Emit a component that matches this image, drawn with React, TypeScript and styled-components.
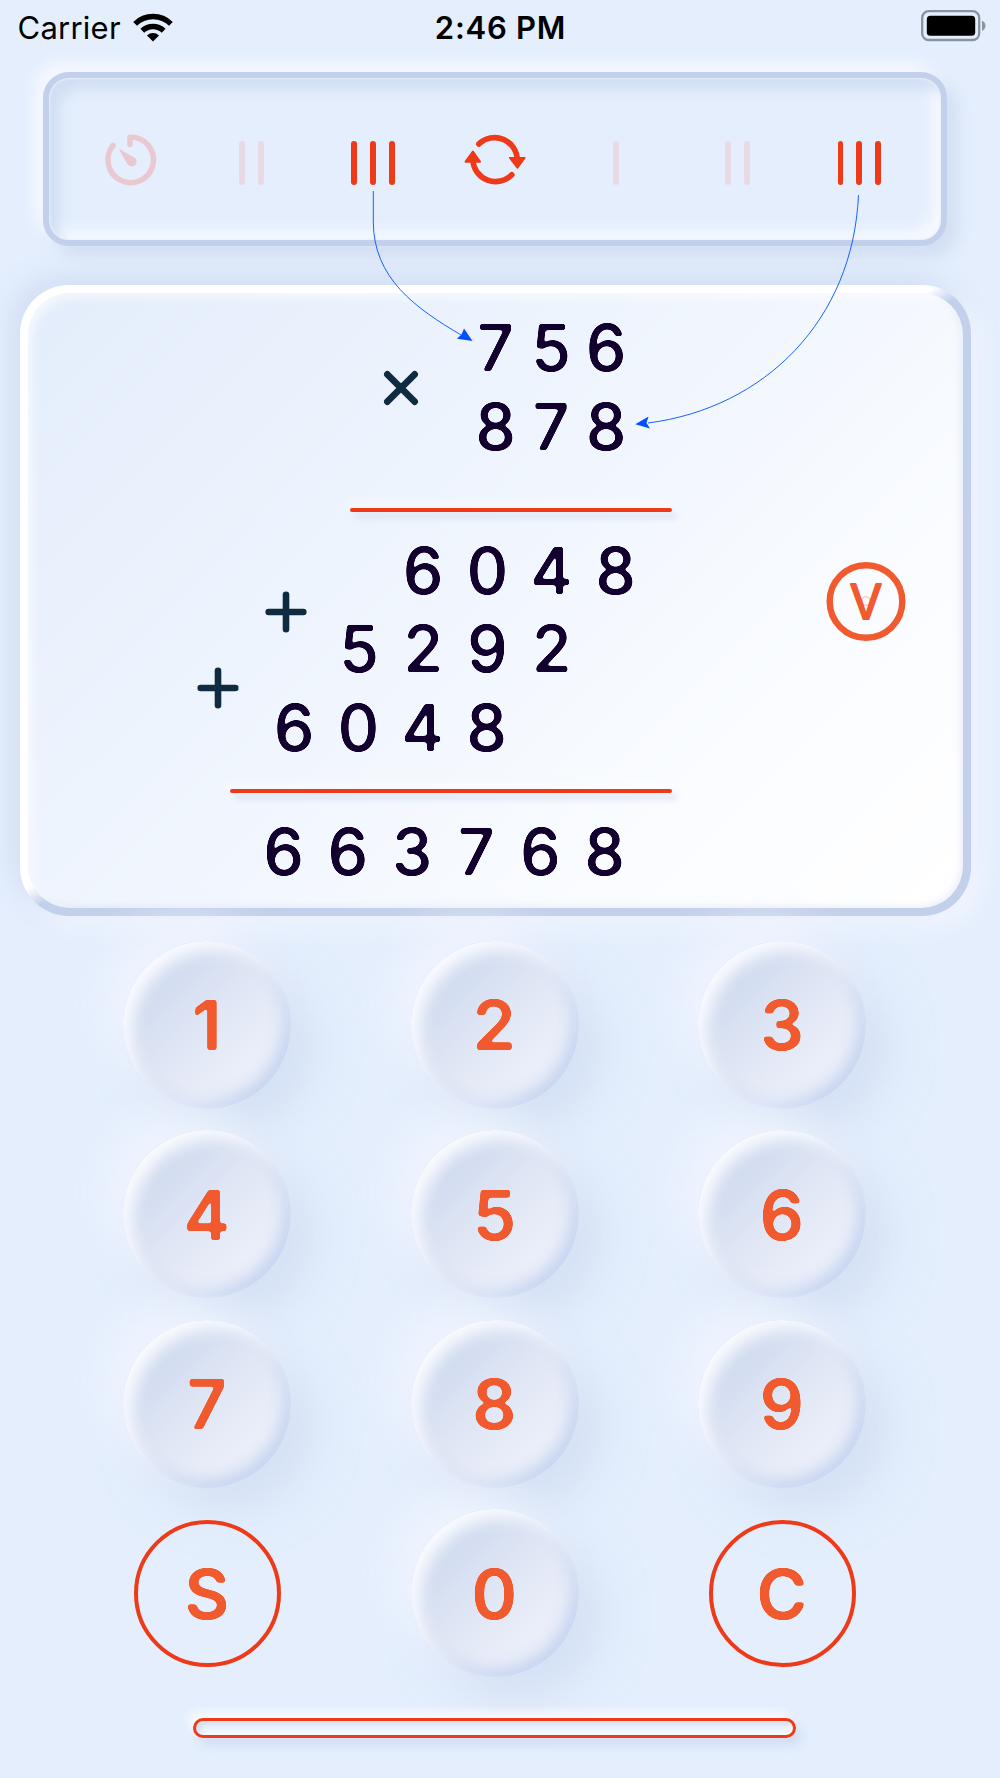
import React from 'react';
import styled, { createGlobalStyle, css } from 'styled-components';

const color = {
  page: '#e4eefd',
  edge: '#c3d0eb',
  red: '#ee3a18',
  orange: '#f15a2e',
  ink: '#12002e',
  operator: '#0f2b3f',
  arrow: '#0050ff',
};

const GlobalStyle = createGlobalStyle`
  * { box-sizing: border-box; }
  body {
    margin: 0;
    background: ${color.page};
    font-family: Inter, "Liberation Sans", sans-serif;
  }
`;

const Screen = styled.main`
  position: relative;
  width: 1000px;
  height: 1778px;
  overflow: hidden;
  display: flex;
  flex-direction: column;
  background: ${color.page};
`;

/* ---------- status bar ---------- */

const StatusBar = styled.header`
  display: grid;
  grid-template-columns: 1fr auto 1fr;
  align-items: center;
  height: 55px;
  padding: 0 14px 0 17px;
  color: #000;
  font-size: 31px;
  line-height: 55px;
`;

const Carrier = styled.div`
  display: flex;
  align-items: center;
  gap: 12px;
  padding-left: 0.5px;
  letter-spacing: 0.25px;
`;

const Clock = styled.time`
  margin-right: 2px;
  font-weight: 600;
  letter-spacing: 0.75px;
`;

const BatteryIcon = styled.svg`
  justify-self: end;
  margin-bottom: 4px;
`;

/* ---------- toolbar ---------- */

const Toolbar = styled.nav`
  flex: none;
  display: flex;
  align-items: center;
  width: 904px;
  height: 174px;
  margin: 17px 0 0 43px;
  padding: 2px 21px 0 20px;
  border: 6px solid ${color.edge};
  border-radius: 26px;
  box-shadow:
    -10px -10px 16px rgba(245, 248, 255, 0.95),
    11px 11px 14px rgba(205, 217, 240, 0.75),
    inset 0 0 2px 1px rgba(232, 240, 253, 1),
    inset 12px 13px 12px -2px rgba(205, 218, 240, 0.8),
    inset -12px -12px 13px -2px rgba(246, 249, 255, 0.95);
`;

const Tool = styled.button`
  flex: 1;
  height: 60px;
  padding: 0;
  border: 0;
  background: none;
  display: flex;
  align-items: center;
  justify-content: center;
`;

const Tally = styled.span`
  display: flex;
  gap: 13px;
  padding-top: 6px;
`;

const Stick = styled.i<{ $on?: boolean }>`
  width: 5.8px;
  height: 44px;
  border-radius: 3px;
  background: ${(p) => (p.$on ? color.red : '#e8dae4')};
`;

/* ---------- calculation display ---------- */

const Display = styled.section`
  flex: none;
  width: 951px;
  height: 631px;
  margin: 39px 0 0 20px;
  padding: 8px;
  border-radius: 49px;
  background: linear-gradient(to bottom right, #fff 48.2%, ${color.edge} 50.2%);
  box-shadow:
    -10px -10px 24px rgba(208, 221, 243, 0.85),
    10px 10px 24px rgba(244, 247, 255, 0.95);
`;

const Sheet = styled.div`
  display: grid;
  grid-template-columns: minmax(0, 1fr) auto;
  align-items: center;
  height: 615px;
  padding-right: 57px;
  border-radius: 42px;
  background: linear-gradient(135deg, #e3edfb 0%, #f1f6fe 48%, #fafcff 75%, #fff 100%);
  box-shadow:
    inset 5px 5px 8px rgba(255, 255, 255, 0.6),
    inset -3px -2px 6px rgba(195, 208, 235, 0.3);
`;

const Working = styled.div`
  display: flex;
  flex-direction: column;
  align-self: start;
  padding-top: 15.5px;
`;

const Step = styled.div<{ $top?: number }>`
  display: grid;
  margin-top: ${(p) => p.$top ?? 0}px;
  > * { grid-area: 1 / 1; }
`;

const Operators = styled.div`
  display: flex;
  flex-direction: column;
`;

const Operator = styled.svg<{ $left: number; $top: number }>`
  display: block;
  flex: none;
  width: 42px;
  height: 42px;
  margin: ${(p) => p.$top}px 0 0 ${(p) => p.$left}px;
  fill: none;
  stroke: ${color.operator};
  stroke-width: 6.6;
  stroke-linecap: round;
`;

const rounded = css`
  filter: url(#soft-corners);
`;

const Rows = styled.div`
  display: flex;
  flex-direction: column;
`;

const Row = styled.div<{ $left: number }>`
  display: flex;
  height: 78.5px;
  padding: 0.6px 0 0 ${(p) => p.$left}px;
  color: ${color.ink};
  font-size: 64px;
  font-weight: 500;
  line-height: 78.5px;
  ${rounded}
`;

const Digit = styled.span<{ $w: number }>`
  width: ${(p) => p.$w}px;
  display: flex;
  justify-content: center;
`;

const Rule = styled.hr<{ $w: number; $left: number; $top: number }>`
  flex: none;
  width: ${(p) => p.$w}px;
  height: 4px;
  margin: ${(p) => p.$top}px 0 0 ${(p) => p.$left}px;
  border: 0;
  border-radius: 2px;
  background: ${color.red};
  box-shadow: 5px 6px 6px rgba(200, 212, 238, 0.7), -5px -5px 8px rgba(255, 255, 255, 0.9);
`;

const CheckButton = styled.button`
  padding: 0;
  border: 0;
  background: none;
  svg { display: block; }
`;

/* ---------- keypad ---------- */

const Keypad = styled.section`
  flex: none;
  display: grid;
  grid-template-columns: repeat(3, 287.5px);
  grid-auto-rows: 189.5px;
  place-items: center;
  margin: 14px 0 0 63.6px;
`;

const Key = styled.button<{ $ring?: boolean }>`
  padding: 0;
  display: grid;
  place-items: center;
  border-radius: 50%;
  font: 600 69px/1 Inter, "Liberation Sans", sans-serif;
  color: ${color.orange};
  ${(p) =>
    p.$ring
      ? css`
          width: 147px;
          height: 147px;
          border: 4px solid ${color.red};
          background: transparent;
        `
      : css`
          width: 168px;
          height: 168px;
          border: 0;
          background: linear-gradient(135deg, #cbd7ee 12%, #e1e7f5 52%, #f0f3fc 88%);
          box-shadow:
            -22px -22px 44px rgba(244, 247, 255, 0.7),
            22px 22px 44px rgba(201, 215, 239, 0.6),
            inset 9px 9px 16px rgba(252, 253, 255, 0.95),
            inset -7px -7px 15px rgba(190, 206, 238, 0.85);
        `}
`;

const KeyLabel = styled.span`
  padding: 2px 9px 0 8px;
  ${rounded}
`;

const HomeBar = styled.div`
  flex: none;
  width: 603px;
  height: 20px;
  margin: 30px 0 0 193px;
  border: 3px solid ${color.red};
  border-radius: 10px;
  background: #eef4fd;
  box-shadow:
    -6px -7px 8px rgba(248, 250, 255, 0.85),
    6px 8px 8px rgba(205, 217, 240, 0.75),
    inset 4px 4px 4px rgba(212, 222, 241, 0.9),
    inset -3px -3px 4px rgba(250, 252, 255, 0.8);
`;

const Pointers = styled.svg`
  position: absolute;
  inset: 0;
  pointer-events: none;
`;

const Hidden = styled.svg`
  position: absolute;
`;

/* ---------- parts ---------- */

const WifiIcon = () => (
  <svg width="40" height="29" viewBox="0 0 40 29" fill="none" stroke="#000" strokeWidth="5.4">
    <path d="M2.1 10.8 A25.5 25.5 0 0 1 37.9 10.8" />
    <path d="M9.3 17.8 A15.4 15.4 0 0 1 30.7 17.8" />
    <path d="M20 28.4 L14 22.4 A8.6 8.6 0 0 1 26 22.4 Z" fill="#000" stroke="none" />
  </svg>
);

const TimerIcon = () => (
  <svg width="60" height="60" viewBox="101 130 60 60" fill="none" stroke="#e9c8cf" strokeWidth="5.4" strokeLinecap="round" strokeLinejoin="round">
    <path d="M131 144.5 V137.1 A22.8 22.8 0 1 1 114.2 145.3" />
    <path d="M121 150.1 L136.2 158.8 A4.4 4.4 0 0 1 129 164 Z" fill="#e9c8cf" stroke="#e9c8cf" strokeWidth="1.2" />
  </svg>
);

const RefreshIcon = () => (
  <svg width="62" height="60" viewBox="463 130 62 60" fill="none" stroke={color.red} strokeWidth="5.6" strokeLinecap="round" strokeLinejoin="round">
    <path d="M477.8 144 A22.7 22.7 0 0 1 516.3 160" />
    <path d="M510.8 174.8 A22.7 22.7 0 0 1 471.9 160" />
    <path d="M509 157.9 H523.6 L516.4 167.7 Z M464.6 161.7 H479 L471.9 151.6 Z" fill={color.red} strokeWidth="2" />
  </svg>
);

const Sticks = ({ n, on }: { n: number; on?: boolean }) => (
  <Tally>
    {Array.from({ length: n }, (_, i) => (
      <Stick key={i} $on={on} />
    ))}
  </Tally>
);

const Digits = ({ value, left, pitch = 64.2 }: { value: string; left: number; pitch?: number }) => (
  <Row $left={left}>
    {value.split('').map((d, i) => (
      <Digit key={i} $w={pitch}>{d}</Digit>
    ))}
  </Row>
);

const Plus = ({ left, top }: { left: number; top: number }) => (
  <Operator $left={left} $top={top} viewBox="0 0 42 42">
    <path d="M21 3.7 V38.3 M3.7 21 H38.3" />
  </Operator>
);

const keys = ['1', '2', '3', '4', '5', '6', '7', '8', '9', 'S', '0', 'C'];

export default function App() {
  return (
    <Screen>
      <GlobalStyle />
      <Hidden width="0" height="0">
        <filter id="soft-corners" colorInterpolationFilters="sRGB" x="-5%" y="-5%" width="110%" height="110%">
          <feGaussianBlur stdDeviation="1.8" />
          <feColorMatrix values="1 0 0 0 0  0 1 0 0 0  0 0 1 0 0  0 0 0 6 -2.2" />
        </filter>
      </Hidden>

      <StatusBar>
        <Carrier>
          Carrier
          <WifiIcon />
        </Carrier>
        <Clock>2:46 PM</Clock>
        <BatteryIcon width="65" height="32" viewBox="0 0 65 32">
          <rect x="1.2" y="1.2" width="57" height="28.8" rx="6.5" fill="none" stroke="#8b929c" strokeWidth="2.3" />
          <rect x="5.8" y="5.8" width="48.4" height="20" rx="3.6" fill="#000" />
          <path d="M61 10.8 Q64.4 12.2 64.4 15.8 Q64.4 19.4 61 20.8 Z" fill="#8b929c" />
        </BatteryIcon>
      </StatusBar>

      <Toolbar>
        <Tool><TimerIcon /></Tool>
        <Tool><Sticks n={2} /></Tool>
        <Tool><Sticks n={3} on /></Tool>
        <Tool><RefreshIcon /></Tool>
        <Tool><Sticks n={1} /></Tool>
        <Tool><Sticks n={2} /></Tool>
        <Tool><Sticks n={3} on /></Tool>
      </Toolbar>

      <Display>
        <Sheet>
          <Working>
            <Step>
              <Operators>
                <Operator $left={352} $top={58} viewBox="0 0 42 42">
                  <path d="M7.3 7.3 L34.7 34.7 M34.7 7.3 L7.3 34.7" />
                </Operator>
              </Operators>
              <Rows>
                <Digits value="756" left={440} pitch={55.3} />
                <Digits value="878" left={440} pitch={55.3} />
              </Rows>
            </Step>
            <Rule $left={322} $w={322} $top={42.5} />
            <Step $top={19}>
              <Operators>
                <Plus left={237} top={60.4} />
                <Plus left={169} top={34} />
              </Operators>
              <Rows>
                <Digits value="6048" left={363} />
                <Digits value="5292" left={299} />
                <Digits value="6048" left={234} />
              </Rows>
            </Step>
            <Rule $left={202} $w={442} $top={22.5} />
            <Step $top={19}>
              <Digits value="663768" left={223.5} />
            </Step>
          </Working>
          <CheckButton>
            <svg width="80" height="80" viewBox="0 0 80 80">
              <circle cx="40" cy="40.5" r="36.3" fill="none" stroke={color.orange} strokeWidth="6.4" />
              <text
                transform="translate(40 57.8) scale(0.98 1)"
                textAnchor="middle"
                fontFamily="Inter, sans-serif"
                fontSize="48"
                fontWeight="400"
                fill={color.orange}
                stroke={color.orange}
                strokeWidth="2"
                strokeLinejoin="round"
              >
                V
              </text>
              <circle cx="40" cy="40" r="4.3" fill="none" stroke={color.orange} strokeOpacity="0.5" strokeWidth="0.8" />
            </svg>
          </CheckButton>
        </Sheet>
      </Display>

      <Keypad>
        {keys.map((k) => (
          <Key key={k} $ring={k === 'S' || k === 'C'}>
            <KeyLabel>{k}</KeyLabel>
          </Key>
        ))}
      </Keypad>

      <HomeBar />

      <Pointers width="1000" height="1778" viewBox="0 0 1000 1778" fill="none" stroke={color.arrow} strokeWidth="0.9">
        <path d="M373.3 191 V222 C373.5 278 415 308 462 335.5" />
        <path d="M858.5 195 C853 320 765 408 648 423" />
        <path d="M472.5 341 L464 328.5 L461.5 334.5 L457 338.7 Z M635.3 424.3 L648.5 416.6 L646.5 423 L650 428.4 Z" fill={color.arrow} stroke="none" />
      </Pointers>
    </Screen>
  );
}
